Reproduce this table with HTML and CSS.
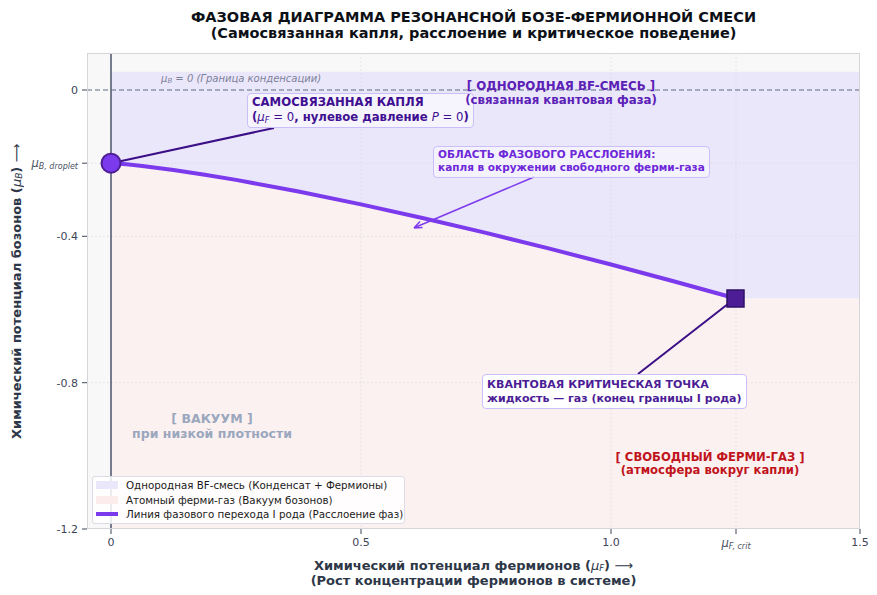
FILE: index.html
```html
<!DOCTYPE html>
<html lang="ru">
<head>
<meta charset="utf-8">
<title>Фазовая диаграмма</title>
<link rel="stylesheet" href="styles.css">
</head>
<body>
<div class="figure">
  <header class="title">
    <div>ФАЗОВАЯ ДИАГРАММА РЕЗОНАНСНОЙ БОЗЕ-ФЕРМИОННОЙ СМЕСИ</div>
    <div>(Самосвязанная капля, расслоение и критическое поведение)</div>
  </header>
  <div class="main">
    <div class="yaxis">
      <div class="ylabel">Химический потенциал бозонов (<i class="mu">μ<sub>B</sub></i>) <span class="arrow">⟶</span></div>
      <div class="yticks">
        <span class="ytick" style="top:37px">0</span>
        <span class="ytick math" style="top:110px"><i>μ<sub>B, droplet</sub></i></span>
        <span class="ytick" style="top:183px">-0.4</span>
        <span class="ytick" style="top:330px">-0.8</span>
        <span class="ytick" style="top:476px">-1.2</span>
      </div>
    </div>
    <div class="plot">
      <svg class="canvas" viewBox="0 0 773 476" width="773" height="476">
        <rect x="0" y="0" width="773" height="476" fill="#f8f8f9"/>
        <path d="M24 18.7 H773 V245.5 H649 L586.5 228.3 L524 211.5 L461.5 195.4 L399 179.9 L336.5 165.2 L274 151.4 L211.5 138.5 L149 126.9 L117.75 121.7 L86.5 117 L70.9 114.9 L55.3 113 L39.6 111.3 L24 110.2 Z" fill="#ebe7fb"/>
        <path d="M24 476 H773 V245.5 H649 L586.5 228.3 L524 211.5 L461.5 195.4 L399 179.9 L336.5 165.2 L274 151.4 L211.5 138.5 L149 126.9 L117.75 121.7 L86.5 117 L70.9 114.9 L55.3 113 L39.6 111.3 L24 110.2 Z" fill="#fcf1f1"/>
        <g stroke="#d9d9de" stroke-width="0.8" stroke-dasharray="1.5 2.5">
          <line x1="274" y1="0" x2="274" y2="476"/>
          <line x1="524" y1="0" x2="524" y2="476"/>
          <line x1="649" y1="0" x2="649" y2="476"/>
          <line x1="0" y1="110.2" x2="773" y2="110.2"/>
          <line x1="0" y1="183.3" x2="773" y2="183.3"/>
          <line x1="0" y1="329.7" x2="773" y2="329.7"/>
        </g>
        <line x1="24" y1="0" x2="24" y2="476" stroke="#4a5568" stroke-width="1.5"/>
        <line x1="0" y1="37" x2="773" y2="37" stroke="#5f6b80" stroke-width="1.2" stroke-dasharray="5 3"/>
        <g stroke="#3d4657" stroke-width="1">
          <line x1="-5" y1="37" x2="0" y2="37"/>
          <line x1="-5" y1="110.2" x2="0" y2="110.2"/>
          <line x1="-5" y1="183.3" x2="0" y2="183.3"/>
          <line x1="-5" y1="329.7" x2="0" y2="329.7"/>
          <line x1="-5" y1="476" x2="0" y2="476"/>
          <line x1="24" y1="476" x2="24" y2="481"/>
          <line x1="274" y1="476" x2="274" y2="481"/>
          <line x1="524" y1="476" x2="524" y2="481"/>
          <line x1="649" y1="476" x2="649" y2="481"/>
          <line x1="773" y1="476" x2="773" y2="481"/>
        </g>
        <line x1="24" y1="110.2" x2="187" y2="75" stroke="#3b0f86" stroke-width="2"/>
        <line x1="648" y1="245.5" x2="551" y2="321" stroke="#3b0f86" stroke-width="2"/>
        <line x1="447" y1="124" x2="329" y2="174" stroke="#7c3aed" stroke-width="1.5"/>
        <path d="M327 175 L333 168.5 M327 175 L335.5 174.5" stroke="#7c3aed" stroke-width="1.5" fill="none"/>
        <path d="M24 110.2 L39.6 111.3 L55.3 113 L70.9 114.9 L86.5 117 L117.75 121.7 L149 126.9 L211.5 138.5 L274 151.4 L336.5 165.2 L399 179.9 L461.5 195.4 L524 211.5 L586.5 228.3 L649 245.5" fill="none" stroke="#7c3aed" stroke-width="4" stroke-linejoin="round"/>
        <circle cx="24" cy="110.2" r="9.5" fill="#7c3aed" stroke="#4c1d95" stroke-width="2"/>
        <rect x="640" y="237" width="17" height="17" fill="#4c1d95" stroke="#2e1065" stroke-width="1.5"/>
        <rect x="0.5" y="0.5" width="772" height="475" fill="none" stroke="#d6d6da" stroke-width="1"/>
      </svg>

      <div class="note-zero"><i>μ<sub>B</sub></i> = 0 (Граница конденсации)</div>

      <div class="ann ann-drop">
        <div>САМОСВЯЗАННАЯ КАПЛЯ</div>
        <div>(<span class="m"><i>μ<sub>F</sub></i> = 0</span>, нулевое давление <span class="m"><i>P</i> = 0</span>)</div>
      </div>

      <div class="label label-mix">
        <div>[ ОДНОРОДНАЯ BF-СМЕСЬ ]</div>
        <div>(связанная квантовая фаза)</div>
      </div>

      <div class="ann ann-sep">
        <div>ОБЛАСТЬ ФАЗОВОГО РАССЛОЕНИЯ:</div>
        <div>капля в окружении свободного ферми-газа</div>
      </div>

      <div class="ann ann-crit">
        <div>КВАНТОВАЯ КРИТИЧЕСКАЯ ТОЧКА</div>
        <div>жидкость — газ (конец границы I рода)</div>
      </div>

      <div class="label label-vac">
        <div>[ ВАКУУМ ]</div>
        <div>при низкой плотности</div>
      </div>

      <div class="label label-gas">
        <div>[ СВОБОДНЫЙ ФЕРМИ-ГАЗ ]</div>
        <div>(атмосфера вокруг капли)</div>
      </div>

      <div class="legend">
        <div class="leg-row"><span class="swatch sw-mix"></span>Однородная BF-смесь (Конденсат + Фермионы)</div>
        <div class="leg-row"><span class="swatch sw-gas"></span>Атомный ферми-газ (Вакуум бозонов)</div>
        <div class="leg-row"><span class="swatch sw-line"></span>Линия фазового перехода I рода (Расслоение фаз)</div>
      </div>
    </div>
  </div>
  <div class="xaxis">
    <div class="xticks">
      <span class="xtick" style="left:24px">0</span>
      <span class="xtick" style="left:274px">0.5</span>
      <span class="xtick" style="left:524px">1.0</span>
      <span class="xtick math" style="left:649px"><i>μ<sub>F, crit</sub></i></span>
      <span class="xtick" style="left:773px">1.5</span>
    </div>
    <div class="xlabel">
      <div class="xl1">Химический потенциал фермионов (<i class="mu">μ<sub class="low">F</sub></i>) <span class="arrow">⟶</span></div>
      <div class="xl2">(Рост концентрации фермионов в системе)</div>
    </div>
  </div>
</div>
</body>
</html>
```

FILE: styles.css
```css
html, body {
  margin: 0;
  padding: 0;
  background: #ffffff;
}
body {
  font-family: "DejaVu Sans", "Noto Sans", sans-serif;
  color: #1a202c;
}
.figure {
  width: 877px;
  height: 595px;
  overflow: hidden;
  display: flex;
  flex-direction: column;
}
.title {
  height: 53px;
  box-sizing: border-box;
  padding-top: 9px;
  margin-left: 87px;
  width: 773px;
  text-align: center;
  font-weight: bold;
  font-size: 14.5px;
  line-height: 16px;
  color: #0d1117;
}
.main {
  display: flex;
  height: 476px;
}
.yaxis {
  width: 87px;
  display: flex;
  flex-shrink: 0;
}
.ylabel {
  width: 34px;
  writing-mode: vertical-rl;
  transform: rotate(180deg);
  text-align: center;
  font-weight: bold;
  font-size: 13px;
  line-height: 34px;
  color: #2d3748;
  white-space: nowrap;
}
.arrow {
  line-height: 0;
  font-weight: normal;
}
.yticks {
  position: relative;
  flex: 1;
}
.ytick {
  position: absolute;
  right: 9px;
  transform: translateY(-50%);
  font-size: 11px;
  color: #3d4657;
  white-space: nowrap;
}
.math i, .mu {
  font-style: italic;
}
.mu {
  font-weight: normal;
}
.ytick.math, .xtick.math {
  font-size: 11.5px;
  color: #4a5263;
}
.math sub {
  font-size: 8px;
}
sub {
  font-size: 0.7em;
  vertical-align: -0.2em;
  line-height: 0;
}
sub.low {
  font-size: 0.65em;
  vertical-align: -0.1em;
}
.plot {
  position: relative;
  width: 773px;
  height: 476px;
  flex-shrink: 0;
}
.canvas {
  position: absolute;
  left: 0;
  top: 0;
  overflow: visible;
}
.note-zero {
  position: absolute;
  left: 74px;
  top: 19px;
  font-size: 10px;
  line-height: 13px;
  font-style: italic;
  color: #7b8199;
  white-space: nowrap;
}
.ann {
  position: absolute;
  border: 1px solid #cbbefc;
  border-radius: 4px;
  font-weight: bold;
  white-space: nowrap;
}
.m {
  font-weight: normal;
}
.ann-drop {
  left: 160px;
  top: 40px;
  padding: 1px 4px 2px 4px;
  background: rgba(255, 255, 255, 0.55);
  font-size: 11.7px;
  line-height: 15px;
  color: #3f0f91;
}
.ann-sep {
  left: 346px;
  top: 93px;
  padding: 1px 4px 3px 4px;
  background: rgba(255, 255, 255, 0.45);
  font-size: 10.5px;
  line-height: 13px;
  color: #6d28d9;
}
.ann-crit {
  left: 395px;
  top: 321px;
  padding: 3px 4px 3px 4px;
  background: #ffffff;
  font-size: 11px;
  line-height: 13.5px;
  color: #4c1d95;
}
.label {
  position: absolute;
  transform: translateX(-50%);
  text-align: center;
  font-weight: bold;
  white-space: nowrap;
}
.label-mix {
  left: 474px;
  top: 26px;
  font-size: 11.8px;
  line-height: 14px;
  color: #5b21b6;
}
.label-vac {
  left: 125px;
  top: 358px;
  font-size: 12.5px;
  line-height: 15px;
  color: #9aa7bd;
}
.label-gas {
  left: 623px;
  top: 398px;
  font-size: 11.6px;
  line-height: 13px;
  color: #c0141c;
}
.legend {
  position: absolute;
  left: 5px;
  top: 423px;
  width: 313px;
  height: 48px;
  box-sizing: border-box;
  padding: 1px 0 0 3px;
  border: 1px solid #dcdce4;
  border-radius: 3px;
  background: rgba(255, 255, 255, 0.85);
  font-size: 10.3px;
  color: #1a1a1a;
  display: flex;
  flex-direction: column;
}
.leg-row {
  display: flex;
  align-items: center;
  height: 14.5px;
  white-space: nowrap;
}
.swatch {
  width: 22px;
  height: 8px;
  margin-right: 8px;
  flex-shrink: 0;
}
.sw-mix { background: #ebe7fb; }
.sw-gas { background: #fcecec; }
.sw-line { height: 4px; background: #7c3aed; }
.xaxis {
  margin-left: 87px;
  width: 773px;
  display: flex;
  flex-direction: column;
}
.xticks {
  position: relative;
  height: 29px;
}
.xtick {
  position: absolute;
  top: 7px;
  transform: translateX(-50%);
  font-size: 11px;
  color: #3d4657;
  white-space: nowrap;
}
.xlabel {
  text-align: center;
  font-weight: bold;
  font-size: 13px;
  line-height: 15px;
  color: #2d3748;
}
```
